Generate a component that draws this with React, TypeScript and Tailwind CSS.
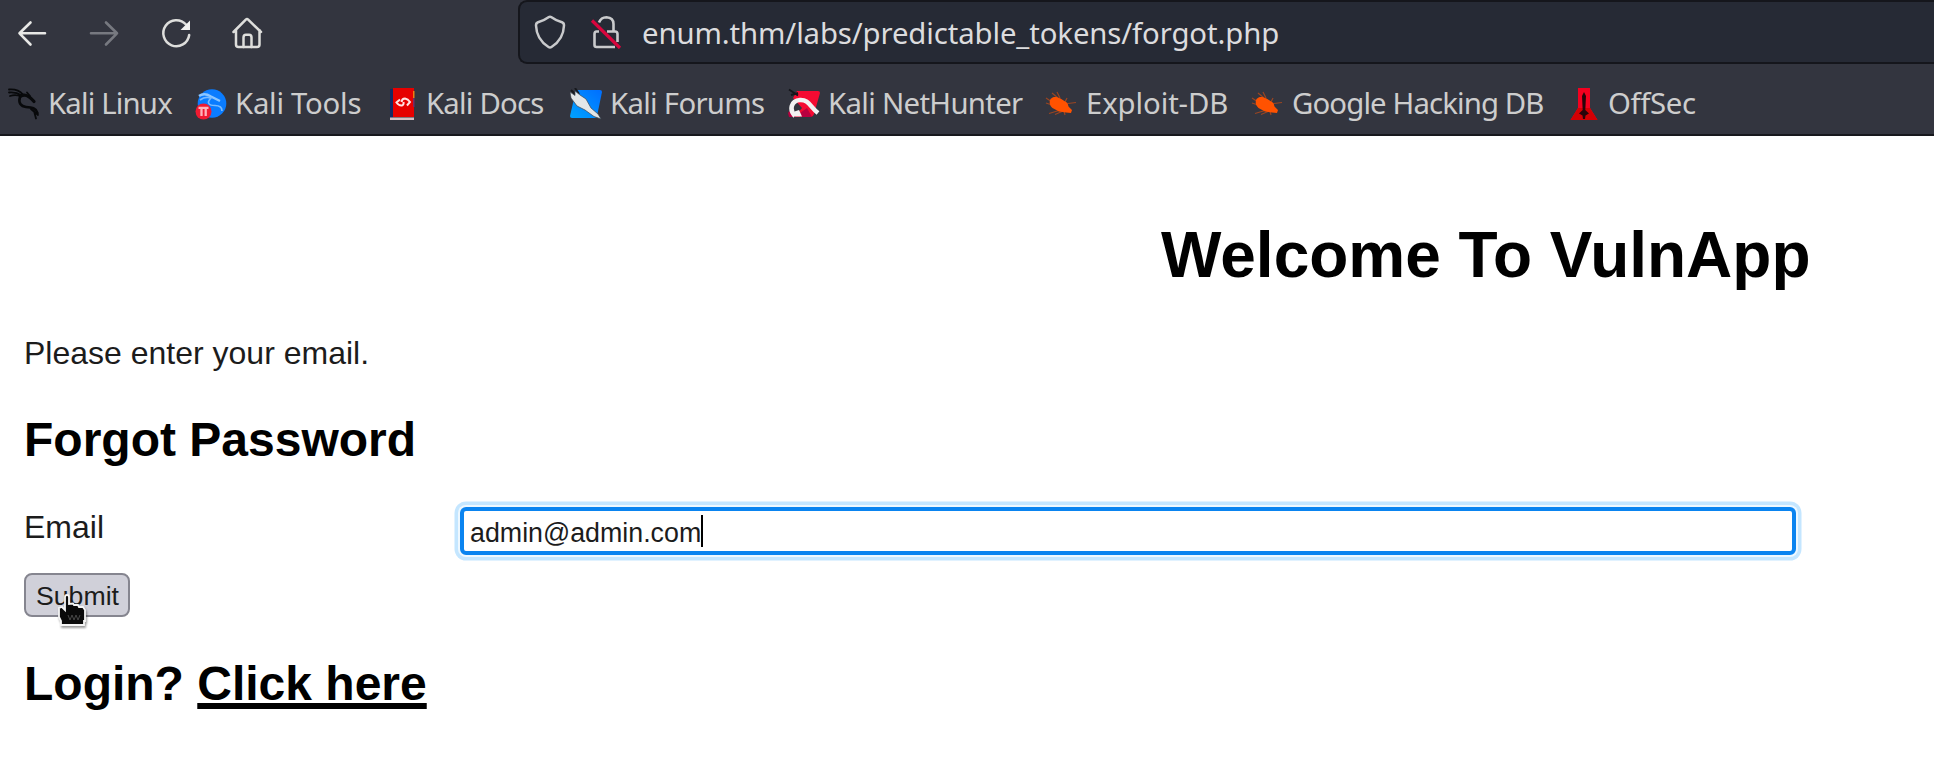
import type { ReactNode } from "react";

function KaliDragon() {
  return (
    <svg viewBox="0 0 32 32" className="size-8" fill="none" stroke="#08090b" strokeLinecap="round">
      <path d="M1 1.500C8 1 12 3 15 6.500M1 4.500C6 4 10 5 14 7.500M2 8C6 6.500 10 7 13 8.500" strokeWidth="1.800" />
      <path d="M12 9C10 15 13 18.500 18 19C24 19.500 28 20 29.500 25" strokeWidth="2.600" />
      <path d="M13 8C17 5.500 21 7.500 26 13.500" strokeWidth="3.200" />
      <path d="M19 4.500L22 8M23 21L30 27M26 23L28 30.500" strokeWidth="1.800" />
    </svg>
  );
}

function KaliTools() {
  return (
    <svg viewBox="0 0 32 32" className="size-8">
      <circle cx="17" cy="15.500" r="14.300" fill="#0a7cff" />
      <path d="M4 8C8 5 12 6 16 8.500L25 13" fill="none" stroke="#8cc6ff" strokeWidth="2.400" />
      <path d="M5 12C9 9 13 9 16 10C11 15 14 17.500 20 17.500C25 17.500 27 19 27 23" fill="none" stroke="#79bbff" strokeWidth="1.700" />
      <circle cx="8.500" cy="23.500" r="8" fill="#f01a31" />
      <path d="M3.500 19.800h10M6.500 20v8M10.700 20v8" fill="none" stroke="#ffb4bb" strokeWidth="2.300" />
    </svg>
  );
}

function KaliDocs() {
  return (
    <svg viewBox="0 0 32 32" className="size-8">
      <path d="M4 1h3v29H4z" fill="#142a63" />
      <path d="M7 0h21v29H7z" fill="#e60000" />
      <path d="M27 3h1.500v7H27z" fill="#ef7c12" />
      <path d="M27 10h1.500v9H27z" fill="#7a2a66" />
      <path d="M4 29.500h24V32H4z" fill="#d4bfc3" />
      <path d="M14 11.500L10.500 14.500Q13 18 16 17.500Q18 17 17.500 14M15.500 14Q16 10.500 19 10.500Q22 11 24 14L21 17.500" fill="none" stroke="#ffe3e3" strokeWidth="2" />
    </svg>
  );
}

function KaliForums() {
  return (
    <svg viewBox="0 0 32 32" className="size-8">
      <defs>
        <linearGradient id="forum" x1="0" y1="1" x2="1" y2="0">
          <stop stopColor="#00a2ff" />
          <stop offset="1" stopColor="#006eff" />
        </linearGradient>
      </defs>
      <path d="M6 2h24q2 0 2 2l-5 24q-.5 2-2.500 2H2q-2 0-2-2z" fill="url(#forum)" />
      <path d="M1 2l5 5M5 0l4 6M0 8l5 3" stroke="#17191e" strokeWidth="2" />
      <path d="M0 4l5 3.500V3l5 4 6 4 5 9 7 6 3 5-7-2.500-9-6.500-8-4-6-8z" fill="#e2e6e8" stroke="#3b4652" strokeWidth=".7" />
    </svg>
  );
}

function KaliNetHunter() {
  return (
    <svg viewBox="0 0 32 32" className="size-8">
      <path d="M9 3h21q2 0 2 2l-6 21q-1 3-4 3H6L14 20 5 10z" fill="#f50b32" />
      <path d="M0 25l3-4 5 8H1zM12 25l7-5 5 9H12z" fill="#b9003f" />
      <path d="M1 1.500l9 6M3 7l7-2" stroke="#14161b" strokeWidth="2" />
      <path d="M7 28C1 22 3 12.500 12 12C21 11.500 22 19 30 25" fill="none" stroke="#f2f2f2" strokeWidth="4.600" />
      <path d="M5 24l6-2 3 6.500H7z" fill="#f2f2f2" />
    </svg>
  );
}

function Bug() {
  return (
    <svg viewBox="0 0 32 32" className="size-8">
      <path d="M7 5l6 5M12 4l3 6M1 10l6 4M1 15l6 2M22 10l-2 4M31 14.500l-8 1M4 25.500l10-3M10 26.500l7-3M20 27l-1-4" fill="none" stroke="#9a4522" strokeWidth="1.200" />
      <path d="M5.500 11c2.500-3 6.500-2.500 10-.5l7 4.500 1 3.500 3.500 3.500-1 3-5-.5-7-1-6.500-3.500c-3-2.500-3.500-6-2-9z" fill="#ff5200" />
    </svg>
  );
}

function OffSec() {
  return (
    <svg viewBox="0 0 32 32" className="size-8">
      <path d="M10 0h12v20l7.500 12h-27L10 20z" fill="#f4001f" />
      <path d="M10 20L2.500 32h27L22 20z" fill="#d40004" />
      <path d="M16 4l2 4-.7 14L21 25.500l-3.500 2L17 31h-2l-.5-3.500-3.500-2 3.700-3.500L14 8z" fill="#28040a" />
    </svg>
  );
}

const bookmarks: { label: string; icon: ReactNode; box: string; text: string }[] = [
  { label: "Kali Linux", icon: <KaliDragon />, box: "w-[187px]", text: "pl-[8px] tracking-[-0.82px]" },
  { label: "Kali Tools", icon: <KaliTools />, box: "w-[191px]", text: "pl-[8px] tracking-[-0.25px]" },
  { label: "Kali Docs", icon: <KaliDocs />, box: "w-[184px]", text: "pl-[8px] tracking-[-0.78px]" },
  { label: "Kali Forums", icon: <KaliForums />, box: "w-[218px]", text: "pl-[8px] tracking-[-0.7px]" },
  { label: "Kali NetHunter", icon: <KaliNetHunter />, box: "w-[257px]", text: "pl-[8px] tracking-[-0.68px]" },
  { label: "Exploit-DB", icon: <Bug />, box: "w-[206px]", text: "pl-[9px] tracking-[-0.1px]" },
  { label: "Google Hacking DB", icon: <Bug />, box: "w-[317px]", text: "pl-[9px] tracking-[-0.87px]" },
  { label: "OffSec", icon: <OffSec />, box: "w-[140px]", text: "pl-[8px] tracking-[-0.35px]" },
];

function Toolbar() {
  return (
    <div className="flex h-[64px] items-start">
      <div className="flex w-[518px] gap-[40px] pl-[16px] pt-[17px]">
        <svg viewBox="0 0 32 32" className="size-8" fill="none" stroke="#e8e8e6" strokeWidth="2.600" strokeLinecap="round" strokeLinejoin="round">
          <path d="M14.500 5.500L3.500 16.300L14.500 27.500M3.500 16.300H29" />
        </svg>
        <svg viewBox="0 0 32 32" className="size-8" fill="none" stroke="#777980" strokeWidth="2.600" strokeLinecap="round" strokeLinejoin="round">
          <path d="M18 5.500L29 16.300L18 27.500M29 16.300H3" />
        </svg>
        <svg viewBox="0 0 32 32" className="size-8" fill="none" stroke="#dededc" strokeWidth="2.500" strokeLinecap="round">
          <path d="M26 7.500A13 13 0 1 0 29.200 18" />
          <path d="M30 3.500V13H20.500z" fill="#f2f2f0" stroke="none" />
        </svg>
        <svg viewBox="0 0 32 32" className="size-8" fill="none" stroke="#dededc" strokeWidth="2.500" strokeLinecap="round" strokeLinejoin="round">
          <path d="M1.500 15L13.800 2.600Q15 1.500 16.200 2.600L29 15M4 13V27.500Q4 30 6.500 30H25Q27.500 30 27.500 27.500V13" />
          <path d="M11.500 30V20.500Q11.500 17.800 14 17.800H17Q19.500 17.800 19.500 20.500V30" />
        </svg>
      </div>
      <div className="flex h-[64px] flex-1 items-start rounded-l-[9px] border-y-2 border-l-2 border-[#15161c] bg-[#262a35] pl-[14px] pt-[13px]">
        <svg viewBox="0 0 32 34" className="h-[34px] w-8" fill="none" stroke="#c9cacc" strokeWidth="2.500" strokeLinejoin="round">
          <path d="M14.500 2.200Q16 1.200 17.500 2.200Q22 5.500 28 7.300Q30 8 30 10.500Q29.500 24.500 17.500 32Q16 33 14.500 32Q2.500 24.500 2 10.500Q2 8 4 7.300Q10 5.500 14.500 2.200z" />
        </svg>
        <svg viewBox="0 0 32 34" className="ml-[24px] h-[34px] w-8" fill="none" stroke="#c9cacc" strokeWidth="2.600">
          <path d="M9 7.500Q11 2.200 16.500 2.200Q23.500 2.500 23.500 9V16M9 16.500H6.500Q4.500 16.500 4.500 19V30Q4.500 32 6.500 32H25M17 16.500H25Q27.500 16.500 27.500 19V27" />
          <path d="M2 5.500L30 33" stroke="#d9063d" strokeWidth="3.200" />
        </svg>
        <span className="mt-px whitespace-nowrap pl-[20px] text-[29.33px] leading-[34px] tracking-[-0.11px] text-[#dcdcde]">
          enum.thm/labs/predictable_tokens/forgot.php
        </span>
      </div>
    </div>
  );
}

export default function App() {
  return (
    <div className="flex h-[768px] w-[1934px] flex-col overflow-hidden bg-white font-['Liberation_Sans',Arial,sans-serif] text-black">
      <header className="h-[136px] shrink-0 border-b-2 border-[#17181d] bg-[#33353f] font-['Noto_Sans',sans-serif]">
        <Toolbar />
        <nav className="flex pl-[8px] pt-[24px]">
          {bookmarks.map(({ label, icon, box, text }) => (
            <a key={label} className={`flex shrink-0 items-start whitespace-nowrap ${box}`}>
              {icon}
              <span className={`-mt-px text-[29.33px] leading-8 text-[#cdcdcd] ${text}`}>{label}</span>
            </a>
          ))}
        </nav>
      </header>
      <main className="flex flex-col items-start pl-[24px] pt-[83px]">
        <h1 className="whitespace-nowrap pl-[1137px] text-[64px] leading-[72px] font-bold">Welcome To VulnApp</h1>
        <p className="mt-[44px] text-[32px] leading-[36px] text-[#1c1c1c]">Please enter your email.</p>
        <h2 className="mt-[42px] text-[48px] leading-[54px] font-bold">Forgot Password</h2>
        <div className="mt-[40px] flex h-[48px] items-start">
          <label className="mt-[2px] w-[436px] text-[32px] leading-[36px] text-[#1c1c1c]">Email</label>
          <div className="flex h-[48px] w-[1336px] items-center rounded-[6px] border-4 border-[#0a84f0] bg-white pl-[6px] shadow-[0_0_0_2px_#eef8ff,0_0_0_5.500px_#c4e6ff]">
            <span className="mt-[3px] text-[26.8px] leading-[30px] text-[#1c1c1c]">admin@admin.com</span>
            <span className="h-[32px] w-[2px] bg-black" />
          </div>
        </div>
        <div className="relative mt-[18px]">
          <button className="block h-[44px] w-[106px] rounded-[8px] border-2 border-[#85858f] bg-[#d0d0d9] pt-px pl-px text-[26.67px] leading-[40px] text-[#1c1c1c]">
            Submit
          </button>
          <svg viewBox="0 0 36 40" className="absolute top-[21px] left-[33px] h-[40px] w-[36px] drop-shadow-[1px_2px_1px_rgba(0,0,0,0.4)]">
            <path d="M8 3Q8 1 10 1T12 3V10L16 9.500L17 11L21 11L22 13L26 13L28 16V27H27V31H4V27L2 23V14L5 13L8 16z" fill="#0a0a0a" stroke="#f5f5f5" strokeWidth="1.800" />
            <path d="M11 21l2 5 2-5 2 5 2-5 2 5 2-5" fill="none" stroke="#484848" strokeWidth="1" />
          </svg>
        </div>
        <h2 className="mt-[40px] whitespace-nowrap text-[48px] leading-[54px] font-bold">
          Login? <a className="underline decoration-[6px] underline-offset-[3px] [text-decoration-skip-ink:none]">Click here</a>
        </h2>
      </main>
    </div>
  );
}
